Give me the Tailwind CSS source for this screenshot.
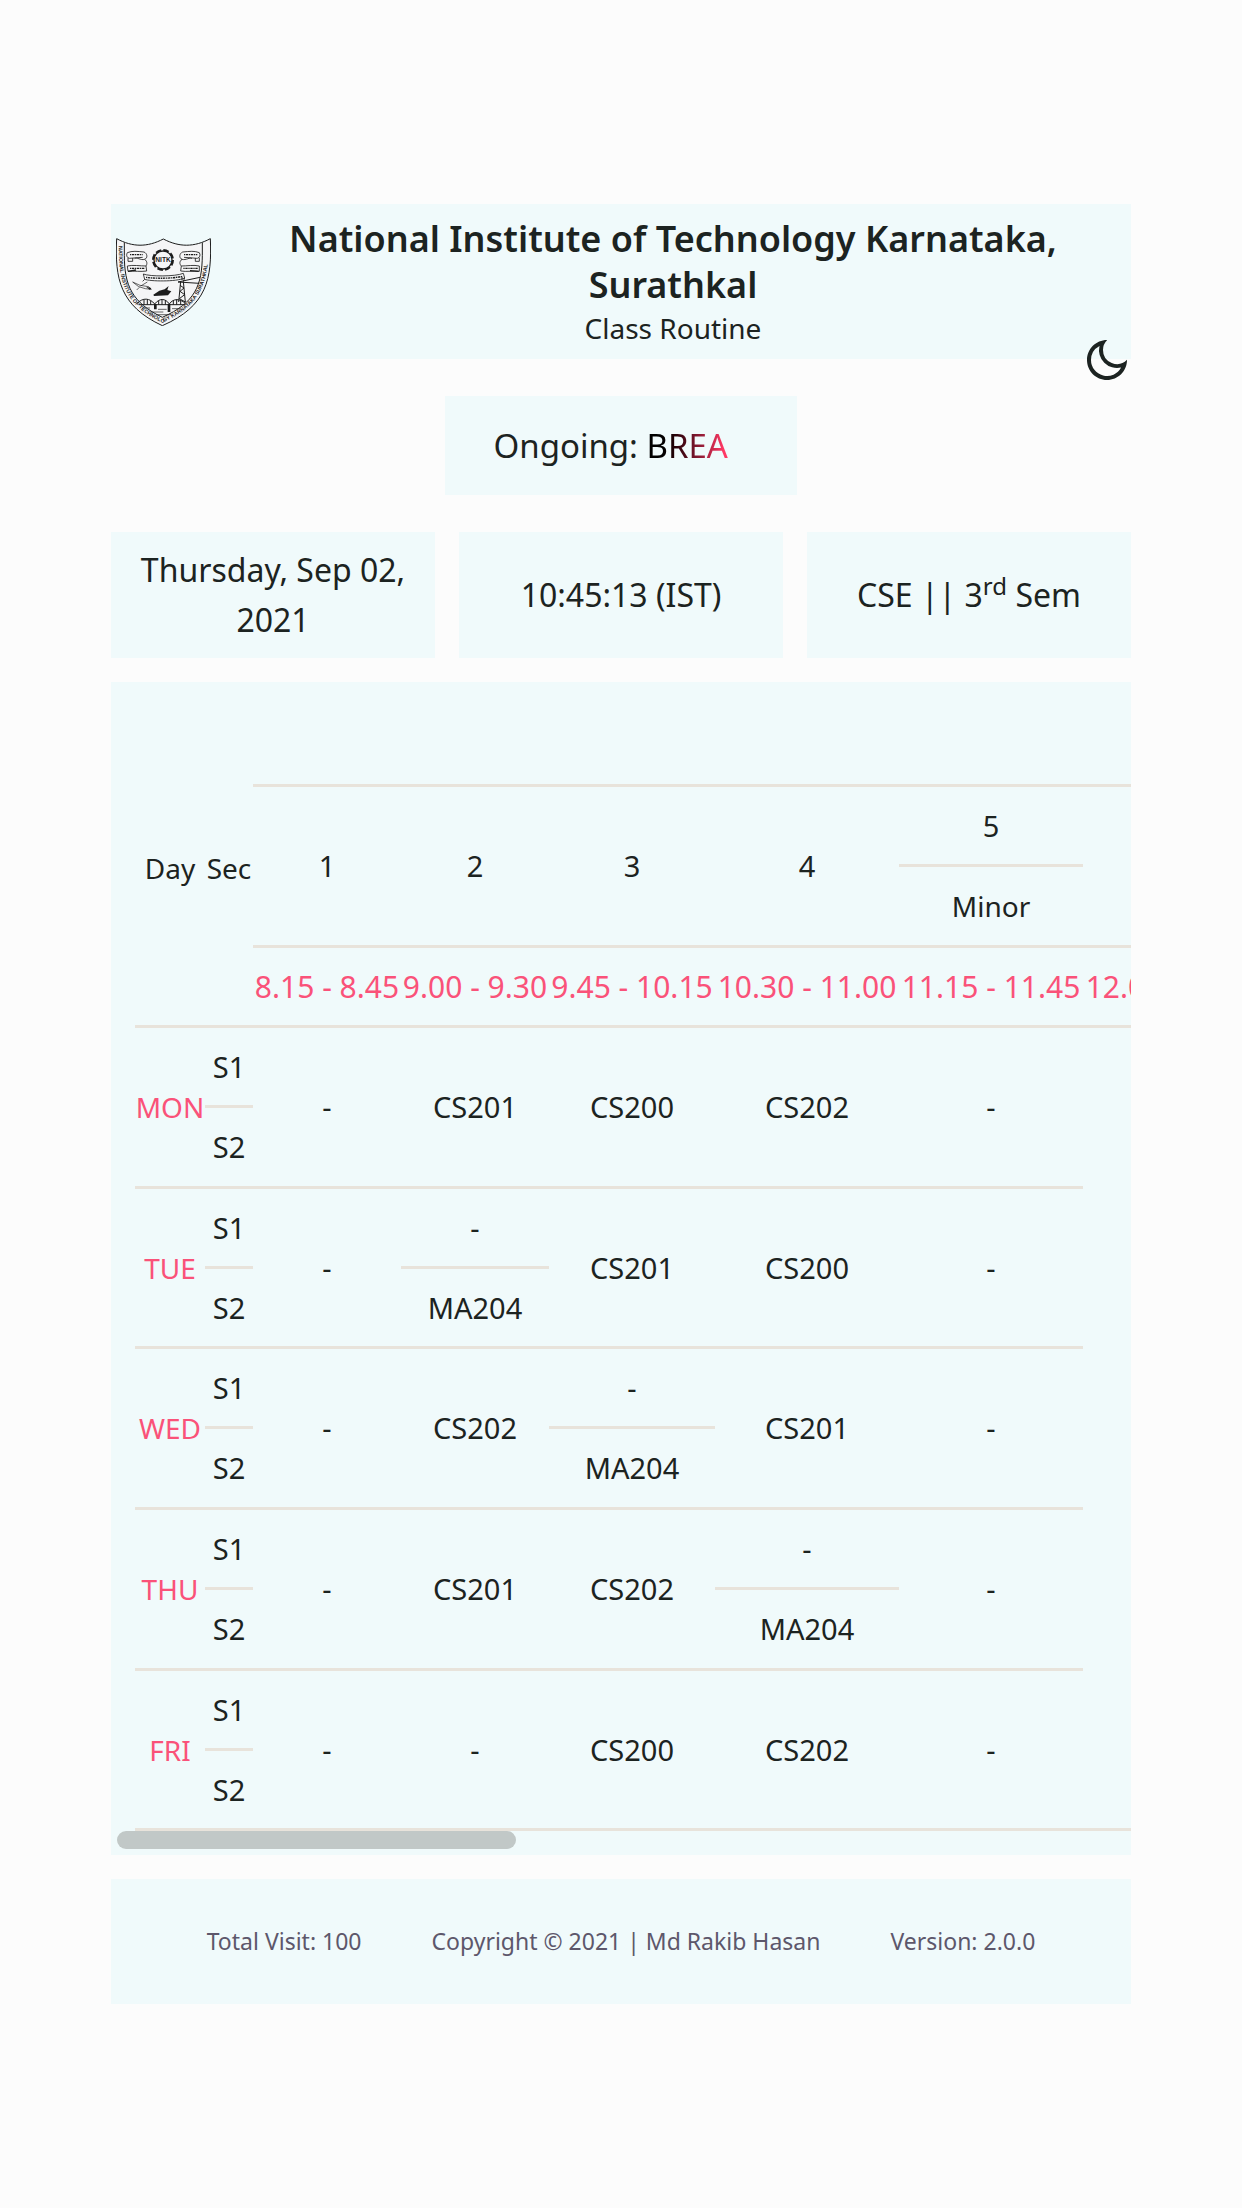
<!DOCTYPE html>
<html lang="en">
<head>
<meta charset="utf-8">
<meta name="viewport" content="width=device-width, initial-scale=1">
<title>Class Routine</title>
<script src="https://cdn.jsdelivr.net/npm/@tailwindcss/browser@4"></script>
</head>
<body class="flex min-h-screen flex-col justify-center bg-[#fcfcfc] px-[111px] font-['Noto_Sans',sans-serif] text-[#1c2321]">

<header class="relative flex items-center bg-[#f0fafb] pt-3 pb-[11px]">
  <svg class="ml-[5px] h-[88px] w-[95px] shrink-0" viewBox="48 148 285 264" fill="none" stroke="#1c1c1c" stroke-width="3" role="img" aria-label="NITK crest">
    <path fill="#f5f5f6" d="M50 150C98 176 142 176 190 151C238 176 282 176 331 150C336 270 322 352 187 411C60 352 44 270 50 150Z"/>
    <path d="M73 162V200C73 290 96 342 187 386C286 342 306 290 307 200V162"/>
    <path id="rim" stroke="none" d="M56 172C56 285 76 350 187 402C304 350 324 285 327 166"/>
    <text fill="#1c1c1c" stroke="none" font-size="16" font-family="Liberation Sans" font-weight="700"><textPath href="#rim">NATIONAL INSTITUTE OF TECHNOLOGY KARNATAKA SURATHKAL</textPath></text>
    <!-- cog with initials -->
    <circle cx="189" cy="214" r="30" stroke-width="6" stroke-dasharray="17 6.6"/>
    <circle cx="189" cy="214" r="27" stroke-width="4"/>
    <text x="189" y="221" text-anchor="middle" fill="#1c1c1c" stroke="none" font-size="20" font-family="Liberation Sans" font-weight="700">NITK</text>
    <!-- ribbons -->
    <g stroke-width="2.5">
      <path d="M82 192C96 186 112 188 132 190C142 194 144 208 134 212C122 216 110 204 104 210M82 192C78 200 80 206 88 209L128 206M84 207V218H98V208M82 232C98 228 122 232 138 232L140 247C122 250 102 246 84 248ZM134 212C142 218 142 226 138 232"/>
      <path d="M298 192C284 186 268 188 248 190C238 194 236 208 246 212C258 216 270 204 276 210M298 192C302 200 300 206 292 209L252 206M298 207V218H286V208M298 232C282 228 260 232 244 232L242 247C260 250 280 246 298 248ZM246 212C238 218 238 226 244 232"/>
      <path d="M130 256C150 264 226 264 250 254L254 268C228 280 150 278 134 272ZM134 272L128 278M254 268L250 278"/>
      <path stroke-width="4" stroke-dasharray="4 2 7 2" d="M90 198H128M90 239H134M252 198H292M250 239H294M138 266C164 270 220 270 246 263"/>
      <path stroke-width="4" d="M84 248L108 244M296 248L270 246"/>
    </g>
    <!-- aeroplane, ship and crane -->
    <path stroke-width="2" d="M98 280L120 290L146 294L154 302L136 300L116 294L98 280M122 292L142 280M118 296L110 304"/>
    <path fill="#1c1c1c" stroke="none" d="M160 318L178 306L194 302L206 292L202 304L214 308L204 320L162 322ZM138 294L154 298L150 304Z"/>
    <path stroke-width="3" d="M234 280L300 266M234 280L298 284M242 278L236 340M250 278L256 340M240 290L252 298L240 308L254 318L238 330L256 340M246 274V264"/>
    <!-- arched bridge over water -->
    <path d="M112 344C128 326 150 328 164 346C178 328 196 328 208 346C220 328 240 330 256 344M116 348H256M132 334V348M142 332V348M152 336V348M176 336V348M186 332V348M196 336V348M220 336V348M230 332V348M242 336V348"/>
    <path stroke-width="8" d="M166 346V362M207 346V370"/>
    <path stroke-width="2" d="M130 358H150M174 362H200M216 360H240M150 370H190M168 378H214"/>
  </svg>
  <div class="flex-1 pl-1 text-center">
    <h1 class="text-[36px] font-semibold leading-[46px]">National Institute of Technology Karnataka,<br>Surathkal</h1>
    <p class="text-[28px] leading-[40px]">Class Routine</p>
  </div>
  <button type="button" aria-label="Switch to dark theme" class="absolute right-0 top-[132px]">
    <svg class="size-12" viewBox="0 0 24 24" fill="currentColor"><path d="M10 7a7 7 0 0 0 12 4.9v.1c0 5.523-4.477 10-10 10S2 17.523 2 12 6.477 2 12 2h.1A6.979 6.979 0 0 0 10 7zm-6 5a8 8 0 0 0 15.062 3.762A9 9 0 0 1 8.238 4.938 7.999 7.999 0 0 0 4 12z"/></svg>
  </button>
</header>

<main>
  <section class="mx-auto my-[37px] flex w-fit bg-[#f0fafb] px-12 py-6 text-[33px] leading-[51px]">
    <p>Ongoing: <span class="inline-block w-[102px] bg-linear-to-r from-black from-10% to-[#ff3864] to-75% bg-clip-text text-transparent">BREA</span></p>
  </section>

  <section class="mb-6 grid grid-cols-3 gap-6 text-center text-[32px] leading-[50px]">
    <p class="flex items-center justify-center bg-[#f0fafb] px-6 py-[13px]">Thursday, Sep 02, 2021</p>
    <p class="flex items-center justify-center bg-[#f0fafb] px-6">10:45:13 (IST)</p>
    <p class="flex items-center justify-center bg-[#f0fafb] px-6"><span>CSE || 3<sup>rd</sup> Sem</span></p>
  </section>

  <section class="relative mb-6 bg-[#f0fafb]">
    <div class="overflow-x-auto p-6 pr-0 [scrollbar-width:none]">
      <table class="w-[2530px] table-fixed border-separate border-spacing-0 text-center text-[29px] leading-10 whitespace-nowrap [&_td]:border-[#e8e3db] [&_th]:border-[#e8e3db] [&_th]:font-normal">
        <colgroup>
          <col class="w-[70px]"><col class="w-[48px]"><col class="w-[148px]"><col class="w-[148px]"><col class="w-[166px]"><col class="w-[184px]"><col class="w-[184px]"><col class="w-[184px]"><col>
        </colgroup>
        <thead>
          <tr class="h-[81px]"><td colspan="2"></td><td colspan="7" class="border-b-3"></td></tr>
          <tr class="h-20">
            <th rowspan="2" class="text-[28px]">Day</th><th rowspan="2" class="text-[28px]">Sec</th>
            <th rowspan="2" class="border-b-3">1</th><th rowspan="2" class="border-b-3">2</th><th rowspan="2" class="border-b-3">3</th><th rowspan="2" class="border-b-3">4</th>
            <th class="border-b-3">5</th><th rowspan="2" class="border-b-3">6</th><th rowspan="2" class="border-b-3"></th>
          </tr>
          <tr class="h-[81px]"><th class="border-b-3 text-[28px]">Minor</th></tr>
          <tr class="h-20 text-[30px] text-[#fa5279] [&>*]:border-b-3">
            <td colspan="2"></td><th>8.15 - 8.45</th><th>9.00 - 9.30</th><th>9.45 - 10.15</th><th>10.30 - 11.00</th><th>11.15 - 11.45</th><th>12.00 - 12.30</th><td></td>
          </tr>
        </thead>
        <tbody class="[&_td]:border-b-3 [&_th]:border-b-3 [&_th]:text-[28px] [&_th]:text-[#fa5279]">
          <tr class="h-20"><th rowspan="2">MON</th><td>S1</td><td rowspan="2">-</td><td rowspan="2">CS201</td><td rowspan="2">CS200</td><td rowspan="2">CS202</td><td rowspan="2">-</td><td rowspan="10"></td><td rowspan="10"></td></tr>
          <tr class="h-[81px]"><td>S2</td></tr>
          <tr class="h-20"><th rowspan="2">TUE</th><td>S1</td><td rowspan="2">-</td><td>-</td><td rowspan="2">CS201</td><td rowspan="2">CS200</td><td rowspan="2">-</td></tr>
          <tr class="h-20"><td>S2</td><td>MA204</td></tr>
          <tr class="h-20"><th rowspan="2">WED</th><td>S1</td><td rowspan="2">-</td><td rowspan="2">CS202</td><td>-</td><td rowspan="2">CS201</td><td rowspan="2">-</td></tr>
          <tr class="h-[81px]"><td>S2</td><td>MA204</td></tr>
          <tr class="h-20"><th rowspan="2">THU</th><td>S1</td><td rowspan="2">-</td><td rowspan="2">CS201</td><td rowspan="2">CS202</td><td>-</td><td rowspan="2">-</td></tr>
          <tr class="h-[81px]"><td>S2</td><td>MA204</td></tr>
          <tr class="h-20"><th rowspan="2">FRI</th><td>S1</td><td rowspan="2">-</td><td rowspan="2">-</td><td rowspan="2">CS200</td><td rowspan="2">CS202</td><td rowspan="2">-</td></tr>
          <tr class="h-20"><td>S2</td></tr>
        </tbody>
      </table>
    </div>
    <div class="absolute bottom-[6px] left-[6px] h-[18px] w-[399px] rounded-full bg-[#c1c8c7]"></div>
  </section>
</main>

<footer class="flex justify-center gap-[70px] bg-[#f0fafb] py-11 text-[23px] leading-[37px] text-[#5d576b]">
  <p>Total Visit: 100</p>
  <p>Copyright © 2021 | Md Rakib Hasan</p>
  <p>Version: 2.0.0</p>
</footer>
</body>
</html>
